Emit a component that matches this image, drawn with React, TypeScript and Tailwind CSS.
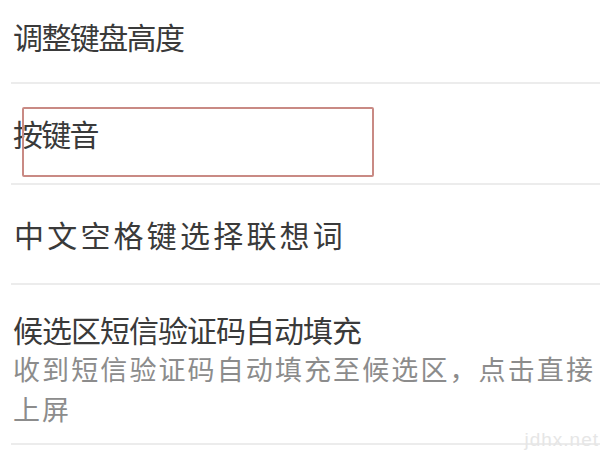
import React from "react";

const font = { fontFamily: '"Noto Sans CJK SC", "Noto Sans", sans-serif' };

export default function App() {
  return (
    <div className="relative w-[600px] h-[450px] overflow-hidden bg-white" style={font}>
      <div className="flex flex-col ml-[11px]">
        <div className="h-[84px] flex items-start pt-[16px] border-b-2 border-[#ececec]">
          <span className="pl-[2px] text-[30px] leading-[40px] tracking-[-1.6px] text-[#3a3a3a]">调整键盘高度</span>
        </div>
        <div className="h-[101px] flex items-center pb-[2px] border-b-2 border-[#ececec]">
          <span className="pl-[2px] text-[30px] leading-[40px] tracking-[-1.8px] text-[#3a3a3a]">按键音</span>
        </div>
        <div className="h-[100px] flex items-center border-b-2 border-[#ececec]">
          <span className="pl-[3px] text-[30px] leading-[40px] tracking-[3.2px] text-[#3a3a3a]">中文空格键选择联想词</span>
        </div>
        <div className="h-[160px] flex flex-col pt-[24px] border-b-2 border-[#ececec]">
          <span className="pl-[2px] text-[30px] leading-[40px] tracking-[-1px] text-[#3a3a3a]">候选区短信验证码自动填充</span>
          <span className="pl-[2px] pr-[2px] text-[27px] leading-[40px] tracking-[2.1px] text-[#8c8c8c]">收到短信验证码自动填充至候选区，点击直接上屏</span>
        </div>
      </div>
      <div className="absolute left-[22px] top-[107px] w-[352px] h-[70px] border-2 border-[#c98a84] rounded-[2px]" />
      <div className="absolute right-[1px] bottom-[1px] text-[19px] leading-none tracking-[1px] text-[#e6e6e6]" style={{ fontFamily: '"Liberation Sans", sans-serif' }}>jdhx.net</div>
    </div>
  );
}
